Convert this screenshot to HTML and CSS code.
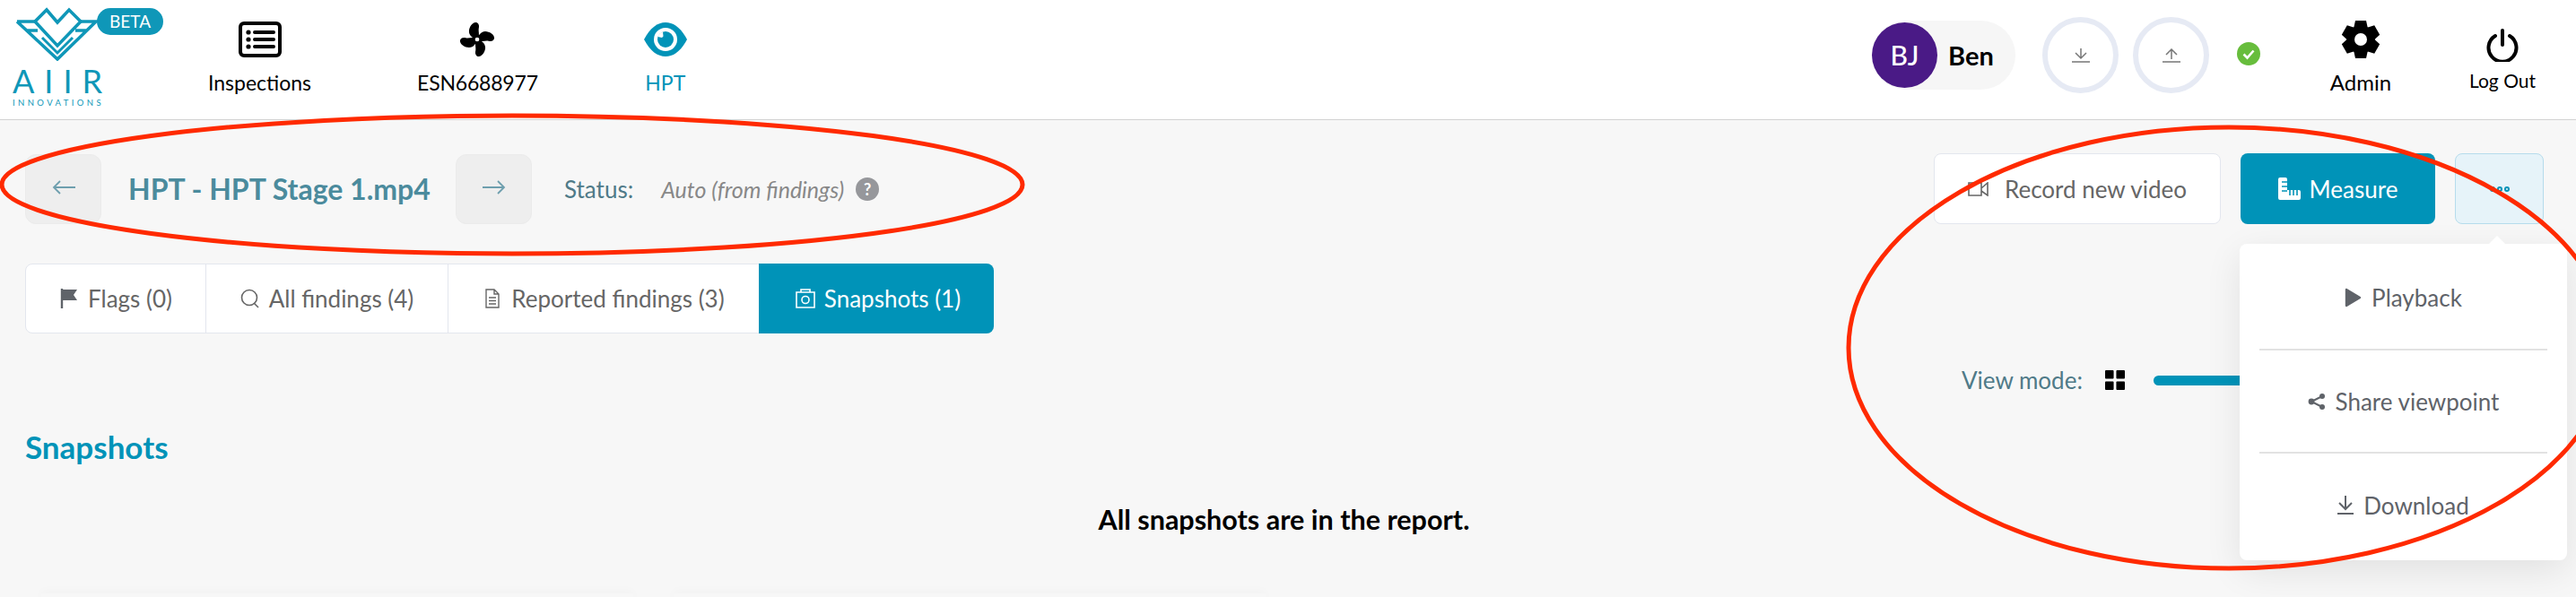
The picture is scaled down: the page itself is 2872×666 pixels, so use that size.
FILE: index.html
```html
<!DOCTYPE html>
<html lang="en">
<head>
    <meta charset="UTF-8">
    <title>HPT - HPT Stage 1.mp4</title>
    <link rel="stylesheet" href="styles.css">
</head>
<body>

    <header class="topbar">
        <div class="logo">
            <svg class="logo_mark" viewBox="0 0 92 60">
                <path d="M22 16 35 3 47 17 60 3 73 16 47 43Z" fill="none" stroke="#0f97b8" stroke-width="3.6"/>
                <path d="M2 16H22M73 16H90L47 58 2 16M13 26H25M67 26H80" fill="none" stroke="#0f97b8" stroke-width="3.6"/>
                <path d="M30 34 47 51 64 34" fill="none" stroke="#0f97b8" stroke-width="3"/>
            </svg>
            <span class="beta">BETA</span>
            <div class="logo_name">AIIR</div>
            <div class="logo_sub">INNOVATIONS</div>
        </div>

        <nav class="crumbs">
            <a class="crumb">
                <svg class="crumb_icon" viewBox="0 0 48 40">
                    <rect x="2" y="2" width="44" height="36" rx="4" fill="none" stroke="#000" stroke-width="4"/>
                    <circle cx="11" cy="12" r="2.6"/><circle cx="11" cy="20" r="2.6"/><circle cx="11" cy="28" r="2.6"/>
                    <path d="M18 12H39M18 20H39M18 28H39" stroke="#000" stroke-width="4" stroke-linecap="round"/>
                </svg>
                <span>Inspections</span>
            </a>
            <a class="crumb crumb_esn">
                <svg class="crumb_icon" viewBox="-24 -22 48 44">
                    <defs><path id="blade" d="M0 0C-4-1-10-4-10-10-10-15-6-21-2-21 1-21 3-18 2-14 1-10 4-5 0 0Z"/></defs>
                    <use href="#blade"/>
                    <use href="#blade" transform="rotate(90)"/>
                    <use href="#blade" transform="rotate(180)"/>
                    <use href="#blade" transform="rotate(270)"/>
                    <circle r="6"/>
                    <circle r="2.6" fill="#fff"/>
                </svg>
                <span>ESN6688977</span>
            </a>
            <a class="crumb crumb_on">
                <svg class="crumb_icon" viewBox="0 0 48 40">
                    <path d="M0 20C7 7 15 1 24 1S41 7 48 20C41 33 33 39 24 39S7 33 0 20Z" fill="#0093b8"/>
                    <circle cx="24" cy="20" r="13" fill="#fff"/>
                    <circle cx="24" cy="20" r="9" fill="#0093b8"/>
                    <path d="M15.5 17A9 9 0 0 1 21 11.5L21.5 16.5 20 18Z" fill="#fff"/>
                </svg>
                <span>HPT</span>
            </a>
        </nav>

        <div class="user_area">
            <div class="user_pill">
                <span class="avatar">BJ</span>
                <span class="user_name">Ben</span>
            </div>
            <div class="sync_btns">
                <span class="sync">
                    <svg viewBox="0 0 20 16" class="sync_icon"><path d="M10 0V11M4 5 10 11 16 5M0 15H20" fill="none" stroke="#777" stroke-width="1.5"/></svg>
                </span>
                <span class="sync">
                    <svg viewBox="0 0 20 16" class="sync_icon"><path d="M10 12V1M4 7 10 1 16 7M0 15H20" fill="none" stroke="#777" stroke-width="1.5"/></svg>
                </span>
            </div>
            <svg class="ok_icon" viewBox="0 0 26 26">
                <circle cx="13" cy="13" r="13" fill="#67bd3c"/>
                <path d="M7.5 13.5 11.5 17.5 18.5 9.5" fill="none" stroke="#fff" stroke-width="2.6"/>
            </svg>
            <a class="crumb admin">
                <svg class="crumb_icon" viewBox="-22 -22 44 44">
                    <defs><path id="tooth" d="M-6-21H6L8-12H-8Z"/></defs>
                    <use href="#tooth"/>
                    <use href="#tooth" transform="rotate(60)"/>
                    <use href="#tooth" transform="rotate(120)"/>
                    <use href="#tooth" transform="rotate(180)"/>
                    <use href="#tooth" transform="rotate(240)"/>
                    <use href="#tooth" transform="rotate(300)"/>
                    <circle r="15.5"/>
                    <circle r="7" fill="#fff"/>
                </svg>
                <span>Admin</span>
            </a>
            <a class="crumb logout">
                <svg class="power_icon" viewBox="0 0 36 37">
                    <path d="M10 8A15.5 15.5 0 1 0 26 8" fill="none" stroke="#000" stroke-width="4" stroke-linecap="round"/>
                    <path d="M18 2V18" stroke="#000" stroke-width="4" stroke-linecap="round"/>
                </svg>
                <span>Log Out</span>
            </a>
        </div>
    </header>

    <main class="page">
        <div class="toolbar">
            <div class="video_nav">
                <button class="arrow_btn">
                    <svg viewBox="0 0 26 16" class="arrow_icon"><path d="M26 8H2M9 1 2 8 9 15" fill="none" stroke="#6e9fae" stroke-width="1.8"/></svg>
                </button>
                <h1 class="video_title">HPT - HPT Stage 1.mp4</h1>
                <button class="arrow_btn">
                    <svg viewBox="0 0 26 16" class="arrow_icon"><path d="M0 8H24M17 1 24 8 17 15" fill="none" stroke="#6e9fae" stroke-width="1.8"/></svg>
                </button>
                <span class="status_label">Status:</span>
                <em class="status_value">Auto (from findings)</em>
                <span class="help">?</span>
            </div>
            <div class="actions">
                <button class="btn btn_record">
                    <svg viewBox="0 0 23 16" class="btn_icon"><path d="M1 1H15V15H1ZM15 7 22 1V15L15 10" fill="none" stroke="#666" stroke-width="1.6"/></svg>
                    Record new video
                </button>
                <button class="btn btn_measure">
                    <svg viewBox="0 0 25 25" class="btn_icon_big">
                        <path d="M2 0H8Q10 0 10 2V14H23Q25 14 25 16V23Q25 25 23 25H2Q0 25 0 23V2Q0 0 2 0Z" fill="#fff"/>
                        <path d="M4 5H10M4 10H10M4 15H10M13 20V14M17 20V14M21 20V14" stroke="#0093b8" stroke-width="1.6"/>
                    </svg>
                    Measure
                </button>
                <button class="btn btn_more">
                    <span class="dot"></span><span class="dot"></span><span class="dot"></span>
                </button>
            </div>
        </div>

        <div class="tabs">
            <a class="tab tab_flags">
                <svg viewBox="0 0 20 22" class="tab_icon"><path d="M2 0V22" stroke="#5f6369" stroke-width="2.4"/><path d="M3 1H19L15 7 19 13H3Z" fill="#5f6369"/></svg>
                Flags (0)
            </a>
            <a class="tab tab_all">
                <svg viewBox="0 0 22 22" class="tab_icon"><circle cx="10" cy="10" r="8.5" fill="none" stroke="#666" stroke-width="1.6"/><path d="M15 16 20 21" stroke="#666" stroke-width="1.6"/></svg>
                All findings (4)
            </a>
            <a class="tab tab_reported">
                <svg viewBox="0 0 20 22" class="tab_icon"><path d="M3 1H12L17 6V21H3ZM12 1V6H17M6 10H14M6 13.5H14M6 17H14" fill="none" stroke="#666" stroke-width="1.4"/></svg>
                Reported findings (3)
            </a>
            <a class="tab tab_on">
                <svg viewBox="0 0 22 22" class="tab_icon"><path d="M1 4H21V21H1ZM6 4V1H16V4" fill="none" stroke="#fff" stroke-width="1.6"/><circle cx="11" cy="12.5" r="4" fill="none" stroke="#fff" stroke-width="1.6"/></svg>
                Snapshots (1)
            </a>
        </div>

        <div class="view_row">
            <span class="view_label">View mode:</span>
            <svg viewBox="0 0 23 23" class="grid_icon">
                <rect width="10" height="10" rx="1"/><rect x="13" width="10" height="10" rx="1"/>
                <rect y="13" width="10" height="10" rx="1"/><rect x="13" y="13" width="10" height="10" rx="1"/>
            </svg>
            <div class="slider"></div>
        </div>

        <h2 class="section_title">Snapshots</h2>
        <p class="empty_msg">All snapshots are in the report.</p>

        <div class="cards">
            <div class="card"></div>
            <div class="card"></div>
        </div>

        <div class="menu">
            <a class="menu_item">
                <svg viewBox="0 0 19 22" class="menu_play"><path d="M2 2 17 11 2 20Z" fill="#5f6369" stroke="#5f6369" stroke-width="2.4" stroke-linejoin="round"/></svg>
                Playback
            </a>
            <a class="menu_item">
                <svg viewBox="0 0 20 18" class="menu_share">
                    <path d="M16 3 4 9 16 15" fill="none" stroke="#5f6369" stroke-width="2"/>
                    <circle cx="16" cy="3" r="3" fill="#5f6369"/><circle cx="4" cy="9" r="3.4" fill="#5f6369"/><circle cx="16" cy="15" r="3" fill="#5f6369"/>
                </svg>
                Share viewpoint
            </a>
            <a class="menu_item">
                <svg viewBox="0 0 18 21" class="menu_down"><path d="M9 0V15M2 8 9 15 16 8M0 20H18" fill="none" stroke="#5f6369" stroke-width="2"/></svg>
                Download
            </a>
        </div>
    </main>

    <svg class="marks" viewBox="0 0 2872 666">
        <ellipse cx="571" cy="206" rx="569" ry="77" fill="none" stroke="#ff2a00" stroke-width="5"/>
        <ellipse cx="2485" cy="388" rx="424" ry="246" fill="none" stroke="#ff2a00" stroke-width="5"/>
    </svg>

</body>
</html>
```

FILE: styles.css
```css
body{
    margin: 0;
    height: 666px;
    overflow: hidden;
    position: relative;
    background-color: #f7f7f7;
    font-family: "Lato", "Open Sans", sans-serif;
    color: #000;
}

/* top bar */
.topbar{
    display: flex;
    align-items: flex-start;
    height: 133px;
    box-sizing: border-box;
    background-color: #fff;
    box-shadow: 0 1px 0 #d2d2d2;
    padding-right: 44px;
}

.logo{
    position: relative;
    width: 168px;
    margin-left: 14px;
    flex-shrink: 0;
}
.logo_mark{
    display: block;
    width: 92px;
    height: 60px;
    margin: 8px 0 0 3px;
}
.beta{
    position: absolute;
    left: 94px;
    top: 9px;
    width: 74px;
    height: 30px;
    border-radius: 15px;
    background-color: #0f97b8;
    color: #fff;
    font-size: 19px;
    line-height: 30px;
    text-align: center;
}
.logo_name{
    width: 99px;
    font-size: 36px;
    line-height: 36px;
    margin-top: 4px;
    letter-spacing: 11px;
    color: #0f97b8;
}
.logo_sub{
    width: 99px;
    font-size: 9.5px;
    line-height: 12px;
    margin-top: 1px;
    letter-spacing: 3.4px;
    white-space: nowrap;
    color: #0f97b8;
}

.crumbs{
    display: flex;
    gap: 118px;
    margin-left: 50px;
}
.crumb{
    display: flex;
    flex-direction: column;
    align-items: center;
    font-size: 23px;
    line-height: 28px;
}
.crumb_icon{
    width: 48px;
    height: 40px;
    margin-top: 24px;
    margin-bottom: 14px;
}
.crumb_esn span{
    letter-spacing: -0.2px;
}
.crumb_on{
    color: #0093b8;
}

.user_area{
    display: flex;
    align-items: flex-start;
    margin-left: auto;
}
.user_pill{
    display: flex;
    align-items: center;
    width: 160px;
    height: 77px;
    margin-top: 23px;
    border-radius: 39px;
    background-color: #f6f6f6;
}
.avatar{
    width: 73px;
    height: 73px;
    line-height: 73px;
    border-radius: 50%;
    text-align: center;
    background-color: #4a1a86;
    color: #fff;
    font-size: 30px;
    font-weight: 500;
}
.user_name{
    margin-left: 12px;
    font-size: 29px;
    font-weight: 700;
}
.sync_btns{
    display: flex;
    gap: 16px;
    margin-top: 19px;
    margin-left: 30px;
}
.sync{
    display: flex;
    align-items: center;
    justify-content: center;
    width: 85px;
    height: 85px;
    box-sizing: border-box;
    border: 6px solid #e6eaf4;
    border-radius: 50%;
}
.sync_icon{
    width: 20px;
    height: 16px;
}
.ok_icon{
    width: 26px;
    height: 26px;
    margin-top: 47px;
    margin-left: 31px;
}
.admin{
    width: 70px;
    margin-left: 77px;
    font-size: 24px;
}
.admin .crumb_icon{
    width: 44px;
    height: 44px;
    margin-top: 22px;
    margin-bottom: 12px;
}
.logout{
    width: 76px;
    margin-left: 85px;
    font-size: 21px;
    line-height: 26px;
}
.power_icon{
    width: 36px;
    height: 37px;
    margin-top: 32px;
    margin-bottom: 8px;
}

/* content */
.page{
    padding: 38px 36px 0 28px;
}
.toolbar{
    display: flex;
    justify-content: space-between;
    align-items: center;
}
.video_nav{
    display: flex;
    align-items: center;
}
.arrow_btn{
    width: 85px;
    height: 78px;
    padding: 0;
    border: 1px solid #ebebeb;
    border-radius: 12px;
    background-color: #eeeeee;
}
.arrow_icon{
    width: 26px;
    height: 16px;
}
.video_title{
    width: 336px;
    margin: 0 29px 0 30px;
    font-size: 32px;
    font-weight: 700;
    white-space: nowrap;
    color: #4b8b9d;
}
.status_label{
    margin-left: 36px;
    font-size: 26px;
    color: #4f7a88;
}
.status_value{
    margin-left: 31px;
    font-size: 25px;
    color: #888;
}
.help{
    width: 26px;
    height: 26px;
    margin-left: 13px;
    line-height: 26px;
    border-radius: 50%;
    text-align: center;
    font-size: 18px;
    font-weight: 700;
    color: #fff;
    background-color: #96979b;
}

.actions{
    display: flex;
    gap: 22px;
}
.btn{
    display: flex;
    align-items: center;
    justify-content: center;
    height: 79px;
    box-sizing: border-box;
    border-radius: 8px;
    font-family: inherit;
    font-size: 26px;
}
.btn_record{
    width: 320px;
    gap: 18px;
    border: 1px solid #e3e6ee;
    background-color: #fff;
    color: #666;
}
.btn_icon{
    width: 23px;
    height: 16px;
}
.btn_measure{
    width: 217px;
    gap: 10px;
    border: 0;
    background-color: #0093b8;
    color: #fff;
}
.btn_icon_big{
    width: 25px;
    height: 25px;
}
.btn_more{
    width: 99px;
    gap: 2px;
    border: 1px solid #b5dcec;
    background-color: #e6f3f9;
}
.dot{
    width: 6px;
    height: 6px;
    box-sizing: border-box;
    border: 2px solid #0093b8;
    border-radius: 50%;
}

.tabs{
    display: flex;
    width: 1080px;
    height: 78px;
    margin-top: 44px;
    box-sizing: border-box;
    border: 1px solid #e3e6ee;
    border-radius: 8px;
    background-color: #fff;
}
.tab{
    display: flex;
    align-items: center;
    justify-content: center;
    gap: 10px;
    box-sizing: border-box;
    border-right: 1px solid #e3e6ee;
    font-size: 26px;
    color: #666;
}
.tab_flags{ width: 201px; }
.tab_all{ width: 270px; }
.tab_reported{ width: 347px; }
.tab_on{
    flex: 1;
    margin: -1px;
    padding-left: 4px;
    border: 0;
    border-radius: 0 8px 8px 0;
    background-color: #0093b8;
    color: #fff;
}
.tab_icon{
    width: 22px;
    height: 22px;
}

.view_row{
    display: flex;
    align-items: center;
    height: 40px;
    margin-top: 32px;
    margin-left: 2159px;
}
.view_label{
    font-size: 26px;
    color: #4f7a88;
}
.grid_icon{
    width: 22px;
    height: 22px;
    margin-left: 25px;
}
.slider{
    flex-shrink: 0;
    width: 300px;
    height: 11px;
    margin-left: 32px;
    border-radius: 6px;
    background-color: #0093b8;
}

.section_title{
    margin: 34px 0 0;
    font-size: 35px;
    line-height: 40px;
    font-weight: 700;
    color: #0093b8;
}
.empty_msg{
    margin: 43px 0 0;
    padding-right: 1px;
    font-size: 30.5px;
    line-height: 36px;
    font-weight: 700;
    text-align: center;
}
.cards{
    display: flex;
    gap: 45px;
    margin: 65px 0 0 18px;
}
.card{
    width: 660px;
    height: 4px;
    background-color: #f7f7f7;
    box-shadow: 0 0 12px rgba(0,0,0,.06);
}

/* popup menu and the arrow above it */
.menu{
    position: absolute;
    left: 2497px;
    top: 272px;
    display: grid;
    grid-template-rows: 119px 115px 119px;
    width: 365px;
    height: 353px;
    padding: 0 22px;
    box-sizing: border-box;
    border-radius: 8px;
    background-color: #fff;
    box-shadow: 0 12px 40px rgba(0,0,0,.09);
}
.menu::before{
    content: "";
    position: absolute;
    left: 277px;
    top: -9px;
    border-left: 10px solid transparent;
    border-right: 10px solid transparent;
    border-bottom: 10px solid #fff;
}
.menu_item{
    display: flex;
    align-items: center;
    justify-content: center;
    gap: 11px;
    font-size: 26px;
    color: #5f6369;
    border-bottom: 2px solid #e2e2e2;
}
.menu_item:first-child{
    padding-top: 2px;
}
.menu_item:last-child{
    padding-bottom: 4px;
    border-bottom: 0;
}
.menu_play{
    width: 19px;
    height: 22px;
}
.menu_share{
    width: 20px;
    height: 18px;
}
.menu_down{
    width: 18px;
    height: 21px;
}

/* the red rings drawn over the screenshot */
.marks{
    position: absolute;
    left: 0;
    top: 0;
    width: 2872px;
    height: 666px;
    pointer-events: none;
}
```
